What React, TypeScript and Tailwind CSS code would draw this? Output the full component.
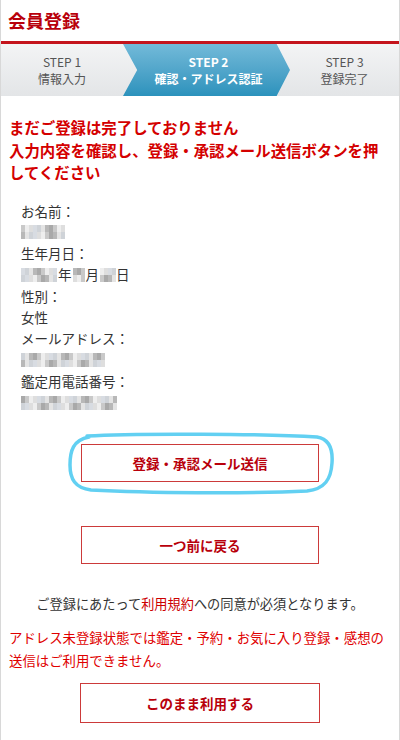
import React from 'react';

const FONT = { fontFamily: '"Noto Sans CJK JP", "Noto Sans", sans-serif' };

// pixelated placeholder for masked personal data
const Mosaic = ({ cells, seed = 1 }: { cells: number; seed?: number }) => {
  const shades = ['#e4e4e4', '#c9c9c9', '#d8dce2', '#b8b8b8', '#eeeeee', '#cfd3d8', '#a9a9a9', '#dedede'];
  return (
    <span className="inline-flex h-[14px] align-middle">
      {Array.from({ length: cells }).map((_, i) => (
        <span key={i} className="flex flex-col w-[4px]">
          <span className="h-[7px]" style={{ backgroundColor: shades[(i * 3 + seed) % shades.length] }} />
          <span className="h-[7px]" style={{ backgroundColor: shades[(i * 5 + seed * 2 + 1) % shades.length] }} />
        </span>
      ))}
    </span>
  );
};

const Field = ({ label, children }: { label: string; children: React.ReactNode }) => (
  <div>
    <div>{label}</div>
    <div className="h-[21.3px] flex items-center">{children}</div>
  </div>
);

const OutlineButton = ({ label }: { label: string }) => (
  <button className="w-[238px] h-[38px] border border-[#cc3a3a] bg-white text-[#b8000b] text-[13.5px] font-bold flex items-center justify-center">
    {label}
  </button>
);

export default function App() {
  return (
    <div style={FONT} className="w-[400px] h-[740px] bg-white border-x border-[#d8d8d8] overflow-hidden text-[#333]">
      <div className="h-[41px] px-[7px] flex items-center">
        <h1 className="text-[18px] font-bold text-[#b8000b]">会員登録</h1>
      </div>
      <div className="h-[3px] bg-[#c4141c]" />

      {/* step bar */}
      <div className="flex h-[52px] bg-gradient-to-b from-[#f3f4f5] to-[#e3e5e7] text-[12px] leading-[17px]">
        <div className="w-[122px] flex flex-col items-center justify-center text-[#555]">
          <span>STEP 1</span>
          <span>情報入力</span>
        </div>
        <div className="w-[167px] flex flex-col items-center justify-center text-white font-bold pl-[4px] bg-gradient-to-b from-[#72bad9] to-[#2b92bc] [clip-path:polygon(0_0,92%_0,100%_50%,92%_100%,0_100%,8.5%_50%)]">
          <span>STEP 2</span>
          <span>確認・アドレス認証</span>
        </div>
        <div className="flex-1 flex flex-col items-center justify-center text-[#555]">
          <span>STEP 3</span>
          <span>登録完了</span>
        </div>
      </div>

      <p className="mt-[20px] px-[8px] text-[15.4px] leading-[22.5px] font-bold text-[#d40000]">
        まだご登録は完了しておりません
        <br />
        入力内容を確認し、登録・承認メール送信ボタンを押してください
      </p>

      <div className="mt-[17px] pl-[20px] text-[13.5px] leading-[21.3px] text-[#333]">
        <Field label="お名前：">
          <Mosaic cells={11} seed={1} />
        </Field>
        <Field label="生年月日：">
          <Mosaic cells={9} seed={2} />
          <span className="px-[1px]">年</span>
          <Mosaic cells={3} seed={3} />
          <span className="px-[1px]">月</span>
          <Mosaic cells={4} seed={4} />
          <span>日</span>
        </Field>
        <Field label="性別：">女性</Field>
        <Field label="メールアドレス：">
          <Mosaic cells={21} seed={5} />
        </Field>
        <Field label="鑑定用電話番号：">
          <Mosaic cells={24} seed={6} />
        </Field>
      </div>

      <div className="mt-[31px] flex flex-col items-center">
        <div className="relative">
          <OutlineButton label="登録・承認メール送信" />
          <svg className="absolute left-[-14px] top-[-13px] pointer-events-none" width="268" height="64" viewBox="0 0 268 64" fill="none">
            <path
              d="M20 5 C70 2 200 3 250 6 C262 8 266 18 265 32 C264 48 258 58 240 60 C180 63 80 62 24 59 C8 57 3 48 3 34 C3 20 6 9 22 6"
              stroke="#62d0f2"
              strokeWidth="3.5"
              strokeLinecap="round"
            />
          </svg>
        </div>
        <div className="mt-[44px]">
          <OutlineButton label="一つ前に戻る" />
        </div>
      </div>

      <p className="mt-[30px] text-center text-[13.2px] leading-[20px] text-[#333]">
        ご登録にあたって<span className="text-[#cc0000]">利用規約</span>への同意が必須となります。
      </p>

      <p className="mt-[12px] px-[8px] text-[13.4px] leading-[23px] text-[#e00000]">
        アドレス未登録状態では鑑定・予約・お気に入り登録・感想の送信はご利用できません。
      </p>

      <div className="mt-[11px] flex justify-center">
        <button className="w-[240px] h-[40px] border border-[#cc3a3a] bg-white text-[#b8000b] text-[13.5px] font-bold">
          このまま利用する
        </button>
      </div>
    </div>
  );
}
